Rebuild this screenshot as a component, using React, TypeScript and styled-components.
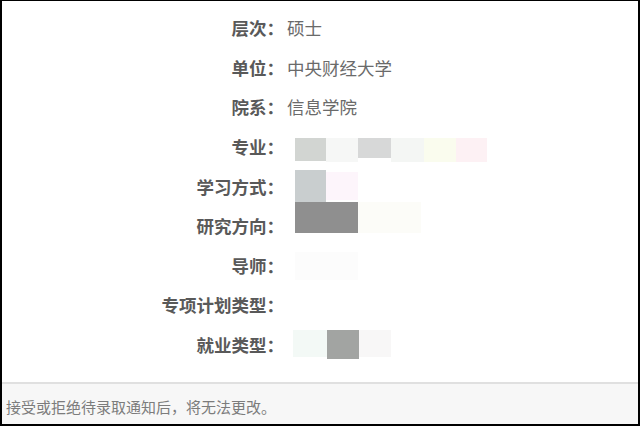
import React from "react";
import styled, { createGlobalStyle } from "styled-components";

const Global = createGlobalStyle`
  html, body { margin: 0; padding: 0; background: #fff; }
  body { font-family: "Noto Sans CJK SC", "Noto Sans", sans-serif; }
`;

const Frame = styled.div`
  box-sizing: border-box;
  width: 640px;
  height: 426px;
  border: 2px solid #000;
  border-top-width: 1px;
  display: flex;
  flex-direction: column;
  background: #fff;
  overflow: hidden;
`;

const Main = styled.div`
  flex: 1;
  padding-top: 7px;
`;

const InfoGrid = styled.div`
  display: grid;
  grid-template-columns: 282px 1fr;
  grid-auto-rows: 39.6px;
  column-gap: 3px;
`;

const Label = styled.div`
  display: flex;
  align-items: center;
  justify-content: flex-end;
  font-size: 17.5px;
  font-weight: 700;
  color: #595959;
  white-space: nowrap;
`;

const Value = styled.div`
  display: flex;
  align-items: center;
  font-size: 17.5px;
  color: #6a6a6a;
  white-space: nowrap;
`;

const Mosaic = styled.div<{ $offset: number; $indent: number }>`
  display: flex;
  align-self: flex-start;
  margin-top: ${(p) => p.$offset}px;
  margin-left: ${(p) => p.$indent}px;
`;

const Tile = styled.div<{ $w: number; $h: number; $c: string; $dy?: number }>`
  width: ${(p) => p.$w}px;
  height: ${(p) => p.$h}px;
  margin-top: ${(p) => p.$dy ?? 0}px;
  background: ${(p) => p.$c};
  filter: blur(0.6px);
`;

const Footer = styled.div`
  box-sizing: border-box;
  height: 42px;
  border-top: 2px solid #e0e0e0;
  background: #f7f7f7;
  display: flex;
  align-items: center;
  padding: 4px 0 0 4px;
  font-size: 15px;
  color: #7c7c7c;
`;

type T = { w: number; h: number; c: string; dy?: number };
type Row = { label: string; value?: string; tiles?: T[]; offset?: number; indent?: number };

const rows: Row[] = [
  { label: "层次：", value: "硕士" },
  { label: "单位：", value: "中央财经大学" },
  { label: "院系：", value: "信息学院" },
  {
    label: "专业：",
    offset: 11,
    indent: 8,
    tiles: [
      { w: 31, h: 23, c: "#d2d5d2" },
      { w: 32, h: 24, c: "#f6f7f6" },
      { w: 33, h: 20, c: "#d7d8d8" },
      { w: 33, h: 24, c: "#f4f6f4" },
      { w: 32, h: 24, c: "#fafcee" },
      { w: 31, h: 24, c: "#fdf1f4" },
    ],
  },
  {
    label: "学习方式：",
    offset: 4,
    indent: 8,
    tiles: [
      { w: 31, h: 32, c: "#c9cecf" },
      { w: 32, h: 28, c: "#fdf5fb", dy: 2 },
    ],
  },
  {
    label: "研究方向：",
    offset: -4,
    indent: 8,
    tiles: [
      { w: 63, h: 31, c: "#8f8f8f" },
      { w: 63, h: 31, c: "#fcfcf8" },
    ],
  },
  {
    label: "导师：",
    offset: 6,
    indent: 8,
    tiles: [{ w: 63, h: 28, c: "#fcfcfc" }],
  },
  { label: "专项计划类型：", value: "" },
  {
    label: "就业类型：",
    offset: 5,
    indent: 6,
    tiles: [
      { w: 34, h: 27, c: "#f3f9f6" },
      { w: 32, h: 29, c: "#a2a4a2" },
      { w: 32, h: 27, c: "#f8f7f7" },
    ],
  },
];

export default function App() {
  return (
    <>
      <Global />
      <Frame>
        <Main>
          <InfoGrid>
            {rows.map((r) => (
              <React.Fragment key={r.label}>
                <Label>{r.label}</Label>
                <Value>
                  {r.tiles ? (
                    <Mosaic $offset={r.offset ?? 0} $indent={r.indent ?? 0}>
                      {r.tiles.map((t, i) => (
                        <Tile key={i} $w={t.w} $h={t.h} $c={t.c} $dy={t.dy} />
                      ))}
                    </Mosaic>
                  ) : (
                    r.value
                  )}
                </Value>
              </React.Fragment>
            ))}
          </InfoGrid>
        </Main>
        <Footer>接受或拒绝待录取通知后，将无法更改。</Footer>
      </Frame>
    </>
  );
}
